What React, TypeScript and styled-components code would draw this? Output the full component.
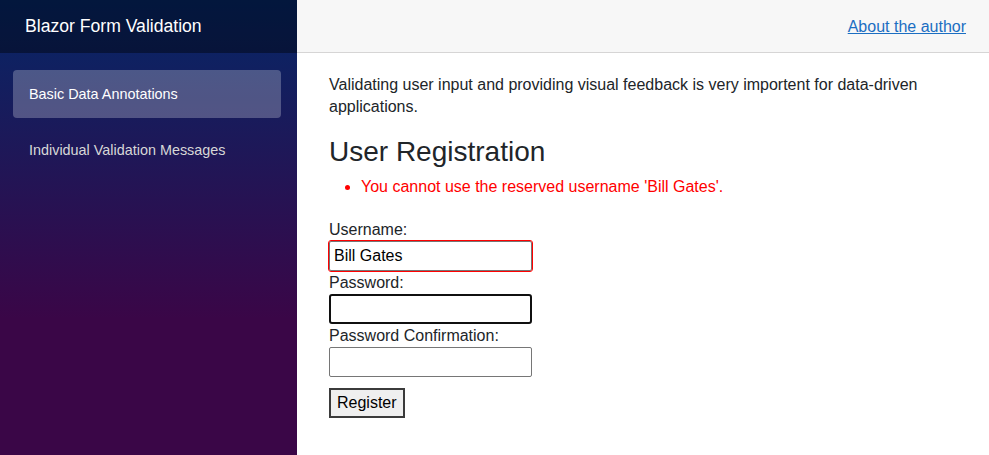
import React from "react";
import styled, { createGlobalStyle } from "styled-components";

const Global = createGlobalStyle`
  html, body { margin: 0; padding: 0; }
  body {
    font-family: "Liberation Sans", Arial, sans-serif;
    color: #212529;
    background: #fff;
  }
  * { box-sizing: border-box; }
`;

const Page = styled.div`
  display: flex;
  width: 989px;
  height: 455px;
  overflow: hidden;
`;

const Sidebar = styled.aside`
  width: 297px;
  flex-shrink: 0;
  background-image: linear-gradient(180deg, rgb(5, 39, 103) 0%, #3a0647 70%);
  display: flex;
  flex-direction: column;
`;

const Brand = styled.div`
  height: 53px;
  background: rgba(0, 0, 0, 0.4);
  display: flex;
  align-items: center;
  padding-left: 25px;
  color: #fff;
  font-size: 17.6px;
`;

const Nav = styled.nav`
  display: flex;
  flex-direction: column;
  padding: 17px 16px 0 13px;
  gap: 8px;
`;

const NavItem = styled.a<{ $active?: boolean }>`
  display: flex;
  align-items: center;
  height: 48px;
  padding-left: 16px;
  border-radius: 4px;
  font-size: 14.4px;
  color: ${(p) => (p.$active ? "#fff" : "#d7d7d7")};
  background: ${(p) => (p.$active ? "rgba(255,255,255,0.25)" : "transparent")};
  text-decoration: none;
`;

const Main = styled.main`
  flex: 1;
  display: flex;
  flex-direction: column;
`;

const TopRow = styled.header`
  height: 53px;
  background: #f7f7f7;
  border-bottom: 1px solid #d6d5d5;
  display: flex;
  align-items: center;
  justify-content: flex-end;
  padding-right: 23px;
`;

const AuthorLink = styled.a`
  color: #1b6ec2;
  text-decoration: underline;
  font-size: 16px;
  margin-top: 2px;
`;

const Content = styled.div`
  padding: 21px 32px 0 32px;
`;

const Intro = styled.p`
  margin: 0;
  font-size: 16px;
  line-height: 22px;
  max-width: 600px;
`;

const Title = styled.h3`
  margin: 17px 0 0;
  font-size: 28px;
  font-weight: 400;
  line-height: 34px;
`;

const Errors = styled.ul`
  margin: 7px 0 0;
  padding-left: 32px;
  color: red;
  font-size: 16px;
  line-height: 22px;
`;

const Form = styled.form`
  display: flex;
  flex-direction: column;
  align-items: flex-start;
  margin-top: 23px;
`;

const Label = styled.label`
  font-size: 16px;
  line-height: 18px;
  color: #212529;
`;

const Input = styled.input<{ $invalid?: boolean; $focused?: boolean }>`
  width: 203px;
  height: 30px;
  margin: 2px 0 3px;
  padding: 0 4px;
  font-family: "Liberation Sans", Arial, sans-serif;
  font-size: 16px;
  color: #000;
  background: #fff;
  border: ${(p) => (p.$focused ? "2px solid #101010" : "1px solid #767676")};
  border-radius: ${(p) => (p.$focused ? "3px" : "2px")};
  outline: ${(p) => (p.$invalid ? "1px solid red" : "none")};
`;

const Button = styled.button`
  margin-top: 8px;
  height: 30px;
  padding: 0 6px;
  font-family: "Liberation Sans", Arial, sans-serif;
  font-size: 16px;
  color: #000;
  background: #efefef;
  border: 2px solid #3b3b3b;
  border-radius: 0;
`;

export default function App() {
  return (
    <>
      <Global />
      <Page>
        <Sidebar>
          <Brand>Blazor Form Validation</Brand>
          <Nav>
            <NavItem $active href="#">Basic Data Annotations</NavItem>
            <NavItem href="#">Individual Validation Messages</NavItem>
          </Nav>
        </Sidebar>
        <Main>
          <TopRow>
            <AuthorLink href="#">About the author</AuthorLink>
          </TopRow>
          <Content>
            <Intro>
              Validating user input and providing visual feedback is very importent for data-driven applications.
            </Intro>
            <Title>User Registration</Title>
            <Errors>
              <li>You cannot use the reserved username 'Bill Gates'.</li>
            </Errors>
            <Form onSubmit={(e) => e.preventDefault()}>
              <Label>Username:</Label>
              <Input $invalid defaultValue="Bill Gates" />
              <Label>Password:</Label>
              <Input $focused type="password" />
              <Label>Password Confirmation:</Label>
              <Input type="password" />
              <Button type="submit">Register</Button>
            </Form>
          </Content>
        </Main>
      </Page>
    </>
  );
}
